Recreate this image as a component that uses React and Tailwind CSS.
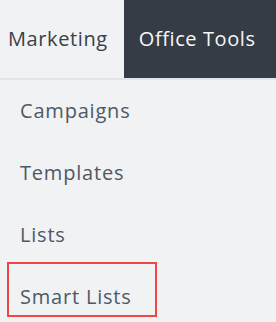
import React from 'react';

const items = ['Campaigns', 'Templates', 'Lists', 'Smart Lists'];

export default function App() {
  return (
    <div
      className="w-[276px] h-[322px] overflow-hidden bg-[#f1f2f4] text-[#4b5563]"
      style={{ fontFamily: '"Open Sans", Lato, sans-serif' }}
    >
      {/* Top tabs */}
      <div className="flex h-[80px] border-b-2 border-[#e2e4e7]">
        <div className="flex items-center pl-2 pr-4 text-[20px] tracking-[0.6px] text-[#3a4048]">Marketing</div>
        <div className="flex flex-1 items-center bg-[#353c46] pl-[15px] text-[20px] tracking-[0.6px] text-[#f7f7f7]">
          Office Tools
        </div>
      </div>

      {/* Menu */}
      <ul>
        {items.map((label) => (
          <li key={label} className="relative flex h-[62px] items-center px-5 text-[20px] tracking-[0.8px] text-[#4d5966]">
            {label}
            {label === 'Smart Lists' && (
              <span className="absolute left-[7px] top-[-4px] h-[55px] w-[150px] border-2 border-[#f24545]" />
            )}
          </li>
        ))}
      </ul>
    </div>
  );
}
